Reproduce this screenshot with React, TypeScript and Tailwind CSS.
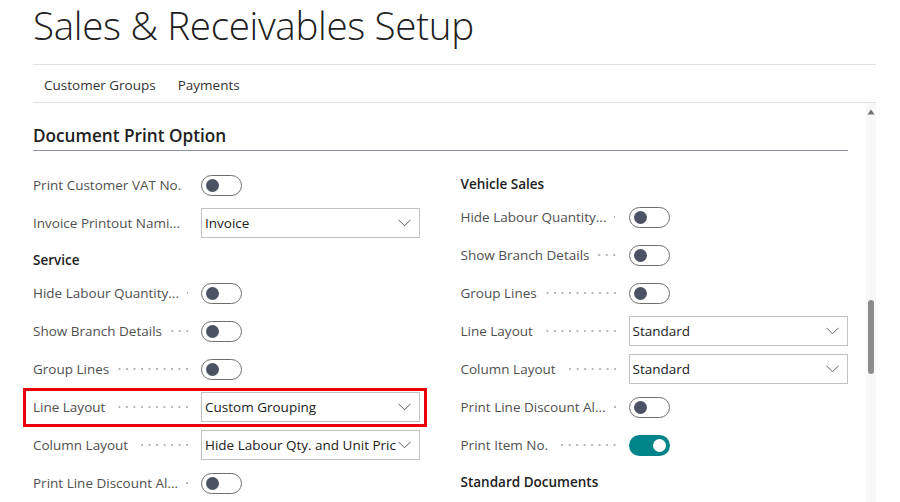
import React from "react";

type Row =
  | { kind: "header"; label: string }
  | { kind: "toggle"; label: string; on?: boolean }
  | { kind: "select"; label: string; value: string; marked?: boolean };

const leftRows: Row[] = [
  { kind: "toggle", label: "Print Customer VAT No." },
  { kind: "select", label: "Invoice Printout Nami...", value: "Invoice" },
  { kind: "header", label: "Service" },
  { kind: "toggle", label: "Hide Labour Quantity..." },
  { kind: "toggle", label: "Show Branch Details" },
  { kind: "toggle", label: "Group Lines" },
  { kind: "select", label: "Line Layout", value: "Custom Grouping", marked: true },
  { kind: "select", label: "Column Layout", value: "Hide Labour Qty. and Unit Price" },
  { kind: "toggle", label: "Print Line Discount Al..." },
];

const rightRows: Row[] = [
  { kind: "header", label: "Vehicle Sales" },
  { kind: "toggle", label: "Hide Labour Quantity..." },
  { kind: "toggle", label: "Show Branch Details" },
  { kind: "toggle", label: "Group Lines" },
  { kind: "select", label: "Line Layout", value: "Standard" },
  { kind: "select", label: "Column Layout", value: "Standard" },
  { kind: "toggle", label: "Print Line Discount Al..." },
  { kind: "toggle", label: "Print Item No.", on: true },
  { kind: "header", label: "Standard Documents" },
];

const Toggle = ({ on }: { on?: boolean }) =>
  on ? (
    <div className="w-[41px] h-[21px] rounded-full bg-[#008489] flex items-center justify-end pr-[4px]">
      <div className="w-[13px] h-[13px] rounded-full bg-white" />
    </div>
  ) : (
    <div className="w-[41px] h-[21px] rounded-full border border-[#6e6e6e] bg-white flex items-center pl-[4px]">
      <div className="w-[13px] h-[13px] rounded-full bg-[#4b5263]" />
    </div>
  );

const Select = ({ value }: { value: string }) => (
  <div className="w-[219px] h-[30px] border border-[#c2c2c2] bg-white flex items-center pl-[3px] pr-[8px]">
    <span className="flex-1 overflow-hidden whitespace-nowrap text-[13.5px] text-[#212121]">{value}</span>
    <svg width="13" height="8" viewBox="0 0 13 8" className="ml-[2px] shrink-0">
      <path d="M0.5 0.8 L6.5 6.8 L12.5 0.8" fill="none" stroke="#5c5c5c" strokeWidth="1" />
    </svg>
  </div>
);

const Field = ({ row }: { row: Row }) => {
  if (row.kind === "header") {
    return (
      <div className="h-[32px] pt-[8px] text-[13.5px] leading-[20px] font-semibold text-[#212121]">
        {row.label}
      </div>
    );
  }
  return (
    <div className="relative h-[38px] flex items-center">
      <div className="w-[168px] flex items-center pr-[10px] shrink-0">
        <span className="whitespace-nowrap text-[13.5px] text-[#505050]">{row.label}</span>
        <div className="flex-1 ml-[8px] h-[4px] bg-[radial-gradient(circle,#b5b5b5_0.9px,transparent_1.2px)] bg-[length:7.5px_4px] bg-right bg-repeat-x" />
      </div>
      {row.kind === "toggle" ? <Toggle on={row.on} /> : <Select value={row.value} />}
      {row.kind === "select" && row.marked && (
        <div className="absolute top-0 bottom-[-1px] -left-[10px] -right-[6px] border-[3px] border-[#e8000b] pointer-events-none" />
      )}
    </div>
  );
};

export default function App() {
  return (
    <div className="w-[900px] h-[502px] overflow-hidden bg-white font-['Open_Sans',sans-serif] pl-[33px] pr-[24px]">
      <h1 className="h-[64px] pt-[1px] text-[38.5px] leading-[48px] font-light text-[#212121] tracking-[-0.3px]">
        Sales &amp; Receivables Setup
      </h1>
      <div className="border-t border-[#e0e0e0] h-[39px] border-b flex items-center pt-[3px] pl-[11px] gap-[22px] text-[13.5px] text-[#333333]">
        <span>Customer Groups</span>
        <span>Payments</span>
      </div>
      <div className="flex h-[400px]">
        <div className="flex-1 pr-[18px]">
          <div className="h-[48px] pt-[21px] border-b border-[#8a8f9a] text-[17.2px] leading-[24px] font-semibold text-[#212121]">
            Document Print Option
          </div>
          <div className="grid grid-cols-2 gap-x-[40px] pt-[15px]">
            <div>
              {leftRows.map((r, i) => (
                <Field key={i} row={r} />
              ))}
            </div>
            <div>
              {rightRows.map((r, i) => (
                <Field key={i} row={r} />
              ))}
            </div>
          </div>
        </div>
        <div className="w-[10px] bg-[#f8f8f8] flex flex-col items-center">
          <svg width="8" height="6" viewBox="0 0 8 6" className="mt-[6px]">
            <path d="M4 0.5 L7.5 5.5 L0.5 5.5 Z" fill="#707070" />
          </svg>
          <div className="mt-[185px] w-[6px] h-[74px] rounded-full bg-[#8c8c8c]" />
        </div>
      </div>
    </div>
  );
}
